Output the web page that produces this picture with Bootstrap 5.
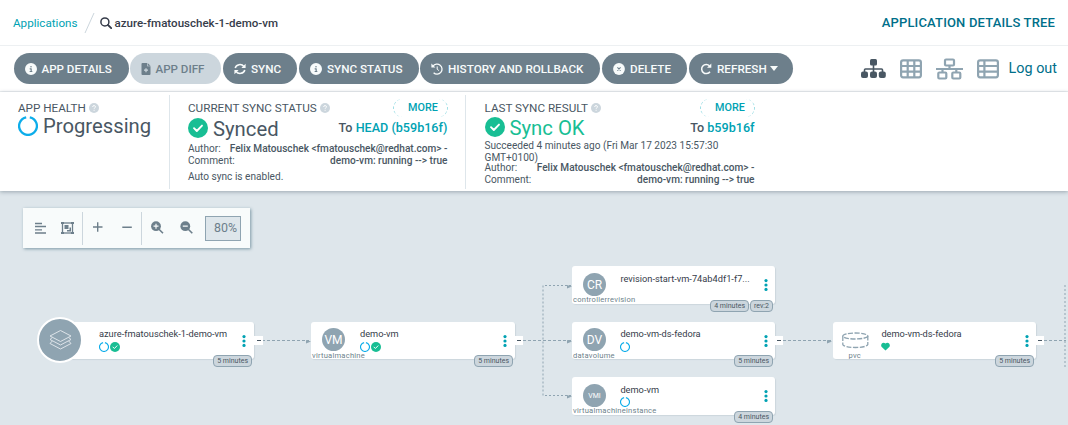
<!DOCTYPE html>
<html lang="en">
<head>
<meta charset="utf-8">
<title>Application details tree</title>
<link href="https://cdn.jsdelivr.net/npm/bootstrap@5.3.0/dist/css/bootstrap.min.css" rel="stylesheet">
<style>
body{font-family:Roboto,sans-serif;color:#495763;width:1068px;height:425px;overflow:hidden;background:#dee6eb;font-size:12px;line-height:12px}
svg{display:block;flex:none}
.crumbs{height:46px;border-bottom:1px solid #edf0f2;padding:0 13px}
.crumbs a{color:#00a2b3;font-size:11.65px}
.crumbs .current{font-size:11.55px;font-weight:500;color:#363c4a;margin-left:2px}
.page-title{color:#006f8a;font-size:13px;font-weight:500;letter-spacing:.16px}
.tools{height:46px;border-bottom:1px solid #edf0f2;padding:0 11px 0 14px}
.argo{height:31px;border-radius:16px;background:#6d7f8b;color:#f8fbfb;font-size:11.7px;font-weight:500;border:0;padding:0 0 0 11px;display:flex;align-items:center;gap:5px;white-space:nowrap;line-height:12px}
.w1,.w2{gap:4.5px;font-size:11.6px}
.argo:disabled{background:#ccd6dd;color:#6d7f8b;opacity:1}
.w1{width:115px}.w2{width:91px}.w3{width:74px}.w4{width:120px}.w5{width:180px}.w6{width:85px}.w7{width:104px}
.logout{font-size:14.4px;color:#006f8a}
.status{height:99px;padding-top:3px;box-shadow:0 1px 4px rgba(70,90,105,.45);position:relative;z-index:1}
.stat{height:94px;border-right:1px solid #dee6eb}
.s1{width:170px;padding:5px 0 0 18px}
.s2{width:296px;padding:5px 17.5px 0 18px}
.s3{width:290px;border:0;padding:5px 1.5px 0 18.5px}
.cap{height:16px;font-size:11.7px;gap:3px}
.more{width:55px;height:18px;border-radius:9px;border-left:1px dashed #9cdde4;border-right:1px dashed #9cdde4;font-size:10.8px;font-weight:500;color:#00a2b3;padding-left:6px}
.big{font-size:20.25px;height:24px;line-height:24px;gap:5px}
.to{font-size:12.6px;font-weight:500}
.to b,.teal{color:#00a2b3;font-weight:500}
.meta{font-size:10.1px;line-height:12px}
.meta b{font-weight:500}
.canvas{height:234px;position:relative;overflow:hidden;background:#dee6eb}
.zoombar{position:absolute;left:23px;top:17px;width:227px;height:40px;background:#f8fbfb;box-shadow:1px 1px 3px #7d98a5}
.zoombar .sep{width:1px;height:33px;background:#ccd6dd}
.pct{width:36px;height:25px;border:1px solid #8fa4b1;background:#dee6eb;color:#6d7f8b;font-size:12.4px;padding:0 0 1px 8px}
.rnode{position:absolute;width:204px;height:37px;background:#fff;border-radius:3px;box-shadow:1px 1px 1px #ccd6dd;color:#363c4a}
.kind-dot{position:absolute;left:11px;top:6px;width:23px;height:23px;border-radius:50%;background:#8fa4b1;color:#fff;font-size:12px;display:flex;align-items:center;justify-content:center}
.kind-name{position:absolute;left:1px;top:29px;font-size:7.6px;line-height:9px;letter-spacing:.22px;color:#6d7f8b;white-space:nowrap}
.rtitle{position:absolute;left:49px;top:6px;font-size:9.25px;line-height:11px;white-space:nowrap}
.marks{position:absolute;left:49px;top:20px;display:flex;gap:1px}
.dots{position:absolute;right:8px;top:13px}
.narrow{width:203px}
.narrow .rtitle,.narrow .marks{left:48.4px}
.narrow .dots{right:7.5px}
.tags{position:absolute;right:2px;top:33px;display:flex;gap:1px}
.tags span{height:12px;border:1px solid #8fa4b1;border-radius:4px;background:#ccd6dd;color:#495763;font-size:7px;line-height:10.5px;padding:0 3px;white-space:nowrap}
.fold{position:absolute;width:9px;height:9px;background:#fff;display:flex;align-items:center;justify-content:center}
.fold:before{content:"";width:4px;height:1px;background:#495763}
.appdot{position:absolute;left:-13px;top:-5px;width:46px;height:46px;border-radius:50%;border:2px solid #fff;background:#8fa4b1;display:flex;align-items:center;justify-content:center}
</style>
<script src="https://cdn.jsdelivr.net/npm/bootstrap@5.3.0/dist/js/bootstrap.bundle.min.js"></script>
</head>
<body>
<svg width="0" height="0" class="position-absolute" aria-hidden="true">
<symbol id="info" viewBox="0 0 512 512"><path fill="currentColor" d="M256 512A256 256 0 1 0 256 0a256 256 0 1 0 0 512zM216 336h24V272H216c-13.3 0-24-10.7-24-24s10.7-24 24-24h48c13.3 0 24 10.7 24 24v88h8c13.3 0 24 10.7 24 24s-10.7 24-24 24H216c-13.3 0-24-10.7-24-24s10.7-24 24-24zm40-208a32 32 0 1 1 0 64 32 32 0 1 1 0-64z"/></symbol>
<symbol id="ok" viewBox="0 0 20 20"><circle cx="10" cy="10" r="10" fill="#18be94"/><path d="M6 10.2l2.8 2.8L14 7.6" fill="none" stroke="#fff" stroke-width="1.9" stroke-linecap="round" stroke-linejoin="round"/></symbol>
<symbol id="spin" viewBox="0 0 20 20"><path d="M8.200 1.300A8.900 8.900 0 1 0 11.800 1.300" fill="none" stroke="#0dadea" stroke-width="2.300"/></symbol>
<symbol id="help" viewBox="0 0 10 10"><circle cx="5" cy="5" r="5" fill="#ccd6dd"/><path d="M3.6 3.9q.1-1.3 1.5-1.3 1.4.1 1.4 1.2 0 .7-.8 1.1-.6.3-.6.9M5.1 6.8v1" fill="none" stroke="#fff" stroke-width="1"/></symbol>
<symbol id="kebab" viewBox="0 0 4 12"><g fill="#00a2b3"><circle cx="2" cy="1.6" r="1.6"/><circle cx="2" cy="6" r="1.6"/><circle cx="2" cy="10.4" r="1.6"/></g></symbol>
</svg>

<header class="bg-white">
<div class="crumbs d-flex align-items-center">
<a class="text-decoration-none" href="#">Applications</a>
<svg width="11" height="22" style="margin:0 5px 0 7px" viewBox="0 0 11 22"><path d="M1 21L10 1" stroke="#ccd6dd"/></svg>
<svg width="12" height="12" viewBox="0 0 12 12"><g fill="none" stroke="#363c4a"><circle cx="4.9" cy="4.9" r="4" stroke-width="1.5"/><path d="M8 8l3.200 3.200" stroke-width="1.800" stroke-linecap="round"/></g></svg>
<span class="current">azure-fmatouschek-1-demo-vm</span>
<span class="page-title ms-auto">APPLICATION DETAILS TREE</span>
</div>
<div class="tools d-flex align-items-center">
<button class="argo w1"><svg width="12" height="12"><use href="#info"/></svg>APP DETAILS</button>
<button class="argo w2" disabled style="margin:0 2px 0 1px"><svg width="10" height="12" viewBox="0 0 10 12"><path d="M1.5 0H6v3.2h3.500V11a1 1 0 0 1-1 1h-7a1 1 0 0 1-1-1V1a1 1 0 0 1 1-1z" fill="#6d7f8b"/><path d="M6.600 0l2.900 2.700H6.600z" fill="#6d7f8b"/><path d="M5 5.200v4M3 7.200h4" stroke="#ccd6dd" stroke-width="1.200"/></svg>APP DIFF</button>
<button class="argo w3"><svg width="12" height="12" viewBox="0 0 12 12"><g fill="none" stroke="currentColor" stroke-width="1.5"><path d="M1.200 5A4.800 4.300 0 0 1 9.900 3.500M10.800 7A4.800 4.300 0 0 1 2.100 8.500"/></g><path fill="currentColor" d="M11.600.7v4.200H7.400zM.4 11.300V7.100h4.200z"/></svg>SYNC</button>
<button class="argo w4" style="margin:0 1px 0 2px"><svg width="12" height="12"><use href="#info"/></svg>SYNC STATUS</button>
<button class="argo w5"><svg width="12" height="12" viewBox="0 0 12 12"><path d="M2 3.200A5 5 0 1 1 2.600 9.800" fill="none" stroke="currentColor" stroke-width="1.3"/><path d="M.4.6v4h4z" fill="currentColor"/><path d="M6.200 3.400v2.800l1.700 1.400" fill="none" stroke="currentColor"/></svg>HISTORY AND ROLLBACK</button>
<button class="argo w6" style="margin:0 2px"><svg width="12" height="12" viewBox="0 0 12 12"><circle cx="6" cy="6" r="5.900" fill="currentColor"/><path d="M4.400 4.400l3.200 3.200M7.600 4.400L4.400 7.600" stroke="#6d7f8b" stroke-width="1.100"/></svg>DELETE</button>
<button class="argo w7"><svg width="12" height="12" viewBox="0 0 12 12"><path d="M9.500 2.700A4.600 4.600 0 1 0 10 8.700" fill="none" stroke="currentColor" stroke-width="1.5"/><path d="M11.300.6v4.200H7z" fill="currentColor"/></svg><span>REFRESH</span><svg width="8" height="5" viewBox="0 0 8 5" style="margin-left:-2px"><path d="M0 0h8L4 5z" fill="currentColor"/></svg></button>
<svg class="ms-auto" width="25" height="20" viewBox="0 0 25 20"><g fill="#495763"><rect x="9" width="7" height="6.500" rx="1.500"/><rect y="12.500" width="7" height="6.500" rx="2"/><rect x="9" y="12.500" width="7" height="6.500" rx="2"/><rect x="17.800" y="12.500" width="7" height="6.500" rx="2"/></g><path d="M12.500 6v7M3.500 13v-2q0-1 1-1h16q1 0 1 1v2" fill="none" stroke="#495763" stroke-width="1.600"/></svg>
<svg width="22" height="20" viewBox="0 0 22 20" style="margin-left:14px"><g fill="none" stroke="#8fa4b1" stroke-width="2.200"><rect x="1.100" y="1.300" width="19.800" height="17" rx="2"/><path d="M1 7h20M1 12.700h20M7.700 1.300v17M14.300 1.300v17"/></g></svg>
<svg width="27" height="22" viewBox="0 0 27 22" style="margin-left:14px"><g fill="none" stroke="#8fa4b1" stroke-width="2.200"><rect x="9" y="1.500" width="9" height="6" rx="1"/><rect x="2.300" y="14.500" width="8" height="6" rx="1"/><rect x="16.300" y="14.500" width="8" height="6" rx="1"/><path d="M0 11h27M13.500 8v3M6.500 11v4M20.300 11v4"/></g></svg>
<svg width="22" height="20" viewBox="0 0 22 20" style="margin:0 10px 0 14px"><g fill="none" stroke="#8fa4b1" stroke-width="2.200"><rect x="1.100" y="1.300" width="19.800" height="17" rx="2"/><path d="M1 7h20M1 12.700h20M7.400 1.300v17"/></g></svg>
<span class="logout">Log out</span>
</div>
</header>

<section class="status bg-white d-flex">
<div class="stat s1">
<div class="cap d-flex align-items-center">APP HEALTH <svg width="10" height="10"><use href="#help"/></svg></div>
<div class="big d-flex align-items-center" style="margin-top:-2px"><svg width="20" height="20"><use href="#spin"/></svg>Progressing</div>
</div>
<div class="stat s2">
<div class="cap d-flex align-items-center">CURRENT SYNC STATUS <svg width="10" height="10"><use href="#help"/></svg><span class="more ms-auto d-flex align-items-center justify-content-center">MORE</span></div>
<div class="big d-flex align-items-center"><svg width="20" height="20"><use href="#ok"/></svg><span style="padding-top:2px">Synced</span><span class="to ms-auto">To <b>HEAD (b59b16f)</b></span></div>
<div class="meta d-flex justify-content-between" style="margin-top:3px"><span>Author:</span><b>Felix Matouschek &lt;fmatouschek@redhat.com&gt; -</b></div>
<div class="meta d-flex justify-content-between"><span>Comment:</span><b>demo-vm: running --&gt; true</b></div>
<div class="meta" style="margin-top:4px">Auto sync is enabled.</div>
</div>
<div class="stat s3">
<div class="cap d-flex align-items-center">LAST SYNC RESULT <svg width="10" height="10"><use href="#help"/></svg><span class="more ms-auto d-flex align-items-center justify-content-center">MORE</span></div>
<div class="big d-flex align-items-center" style="color:#18be94;margin-top:-1px"><svg width="20" height="20"><use href="#ok"/></svg><span style="padding-top:2px">Sync OK</span><span class="to ms-auto" style="color:#495763;padding-top:1px">To <b>b59b16f</b></span></div>
<div class="meta" style="margin-top:1px">Succeeded 4 minutes ago (Fri Mar 17 2023 15:57:30<br>GMT+0100)</div>
<div class="meta d-flex justify-content-between" style="margin-top:-2px"><span>Author:</span><b>Felix Matouschek &lt;fmatouschek@redhat.com&gt; -</b></div>
<div class="meta d-flex justify-content-between"><span>Comment:</span><b>demo-vm: running --&gt; true</b></div>
</div>
</section>

<main class="canvas">
<div class="zoombar d-flex align-items-center">
<svg width="59" height="40" viewBox="0 0 59 40"><g stroke="#6d7f8b" fill="none"><path stroke-width="1.300" d="M12 15.500h7M12 18.500h11M12 21.800h7M12 25h11"/><rect x="39.500" y="15" width="10" height="10" stroke-width="1.300"/><path stroke-width="2" d="M38 15h3M48 15h3M38 25h3M48 25h3"/></g><path fill="#6d7f8b" d="M41.500 17h4v4h-4zM46.500 19.500H48v4h-4V22h2.500z"/></svg>
<span class="sep"></span>
<svg width="58" height="40" viewBox="0 0 58 40"><path stroke="#6d7f8b" stroke-width="1.400" d="M10 19h9.500M14.700 14.200v9.500M39.300 19.200h9.500"/></svg>
<span class="sep"></span>
<svg width="63" height="40" viewBox="0 0 63 40"><g fill="#6d7f8b"><circle cx="14" cy="18.200" r="4.900"/><circle cx="43.300" cy="18.200" r="4.900"/></g><path stroke="#6d7f8b" stroke-width="1.600" d="M17 21.200l4 4M46.300 21.200l4 4"/><path stroke="#f8fbfb" stroke-width="1.200" d="M11.500 18.200h5M14 15.700v5M40.800 18.200h5"/></svg>
<span class="pct d-flex align-items-center">80%</span>
</div>

<svg class="position-absolute top-0 start-0" width="1068" height="234" viewBox="0 0 1068 234"><g fill="none" stroke="#8fa4b1" stroke-dasharray="3 2"><path d="M262 149.500h47M523 149.500h48M783 149.500h48M1044 149.500h22"/><path stroke-dasharray="2 2" d="M571 94.500h-28V204.500h28M1065 94V177"/></g><g fill="#8fa4b1"><path d="M306 149l5 1.500-5 2zM567 94l5 1.500-5 2zM567 149l5 1.500-5 2zM567 204l5 1.500-5 2zM827 149l5 1.500-5 2z"/></g></svg>

<div class="rnode" style="left:50px;top:131px">
<div class="appdot"><svg width="23" height="23" viewBox="0 0 23 23"><g fill="none" stroke="#e5eaee" stroke-width=".9" stroke-linejoin="round"><path d="M11.500 1.500L22 7 11.500 12.500 1 7z"/><path d="M3.300 8.500L1 10.500l10.500 5.500L22 10.500l-2.300-2"/><path d="M3.300 12L1 14.500 11.500 20 22 14.500 19.700 12"/></g></svg></div>
<div class="rtitle">azure-fmatouschek-1-demo-vm</div>
<div class="marks"><svg width="10" height="10"><use href="#spin"/></svg><svg width="10" height="10"><use href="#ok"/></svg></div>
<svg class="dots" width="4" height="12"><use href="#kebab"/></svg><div class="tags"><span>5 minutes</span></div></div>
<i class="fold" style="left:254px;top:145px"></i>

<div class="rnode" style="left:311px;top:131px"><div class="kind-dot">VM</div><div class="kind-name">virtualmachine</div><div class="rtitle">demo-vm</div>
<div class="marks"><svg width="10" height="10"><use href="#spin"/></svg><svg width="10" height="10"><use href="#ok"/></svg></div>
<svg class="dots" width="4" height="12"><use href="#kebab"/></svg><div class="tags"><span>5 minutes</span></div></div>
<i class="fold" style="left:514px;top:145px"></i>

<div class="rnode narrow" style="left:572px;top:75px;height:38px"><div class="kind-dot" style="top:7px">CR</div><div class="kind-name">controllerrevision</div><div class="rtitle" style="top:7px">revision-start-vm-74ab4df1-f7...</div>
<svg class="dots" width="4" height="12"><use href="#kebab"/></svg><div class="tags" style="top:34px"><span>4 minutes</span><span>rev:2</span></div></div>

<div class="rnode narrow" style="left:572px;top:131px"><div class="kind-dot">DV</div><div class="kind-name">datavolume</div><div class="rtitle">demo-vm-ds-fedora</div>
<div class="marks"><svg width="10" height="10"><use href="#spin"/></svg></div>
<svg class="dots" width="4" height="12"><use href="#kebab"/></svg><div class="tags"><span>5 minutes</span></div></div>
<i class="fold" style="left:774px;top:145px"></i>

<div class="rnode narrow" style="left:572px;top:186px;height:38px"><div class="kind-dot" style="top:7px;font-size:7px">VMI</div><div class="kind-name">virtualmachineinstance</div><div class="rtitle" style="top:7px">demo-vm</div>
<div class="marks"><svg width="10" height="10"><use href="#spin"/></svg></div>
<svg class="dots" width="4" height="12"><use href="#kebab"/></svg><div class="tags" style="top:34px"><span>4 minutes</span></div></div>

<div class="rnode narrow" style="left:833px;top:131px"><svg class="position-absolute" style="left:9px;top:10px" width="27" height="17" viewBox="0 0 27 17"><g fill="none" stroke="#8fa4b1" stroke-width="1.300" stroke-dasharray="5 1.500"><ellipse cx="13.300" cy="4" rx="12.500" ry="3"/><path d="M.8 4v8.500c1 4 24 4 25 0V4"/></g></svg><div class="kind-name" style="left:15.5px">pvc</div><div class="rtitle">demo-vm-ds-fedora</div>
<svg class="marks" width="9" height="9" viewBox="0 0 9 9"><path fill="#18be94" d="M4.500 8.500L.5 4.700C-.8 2.200 1.800-.7 4.500 1.400 7.200-.7 9.800 2.200 8.500 4.700z"/></svg>
<svg class="dots" width="4" height="12"><use href="#kebab"/></svg><div class="tags"><span>5 minutes</span></div></div>
<i class="fold" style="left:1035px;top:145px"></i>
</main>
</body>
</html>
